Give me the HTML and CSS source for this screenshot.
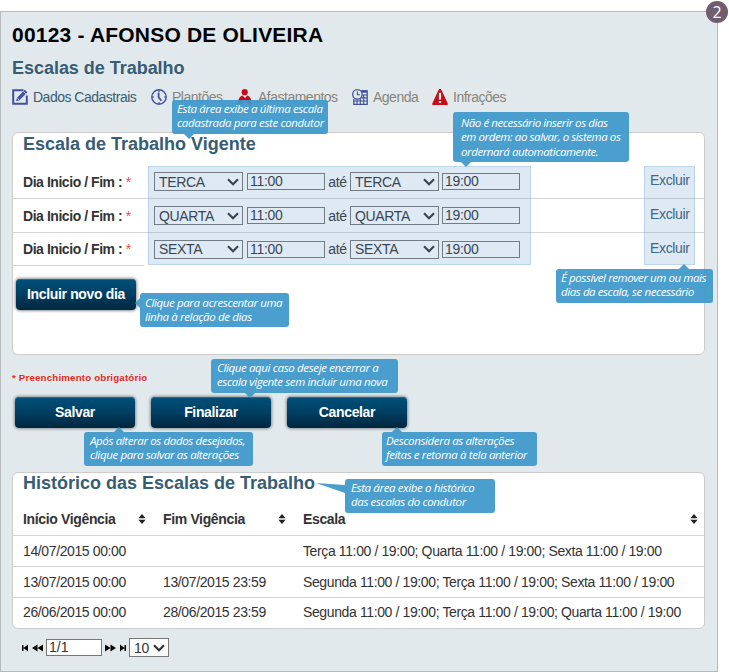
FILE: index.html
```html
<!DOCTYPE html>
<html lang="pt-BR">
<head>
<meta charset="utf-8">
<title>Escalas de Trabalho</title>
<link rel="stylesheet" href="styles.css">
</head>
<body>
<svg width="0" height="0" class="defs" aria-hidden="true">
  <symbol id="chev" viewBox="0 0 12 8"><path d="M1 1.2L6 6.2L11 1.2" fill="none" stroke="currentColor" stroke-width="2.2"/></symbol>
  <symbol id="sort" viewBox="0 0 8 10"><path d="M4 0L7.6 4.3H.4zM4 10L.4 5.7H7.6z" fill="#222"/></symbol>
</svg>
<main class="frame">
  <h1>00123 - AFONSO DE OLIVEIRA</h1>
  <h2 class="subtitle">Escalas de Trabalho</h2>
  <nav class="tabs">
    <a class="tab active t1"><svg viewBox="0 0 16 16"><path d="M11.5 1.2H1.2V14.8H14.8V6.5" fill="none" stroke="#41519f" stroke-width="2"/><path d="M4 12.3L5 8.8L12.8 .8L15.4 3.3L7.5 11.3z" fill="#41519f"/><path d="M5.2 9.2L7.1 11M11.4 2.4L13.8 4.8" stroke="#e2e9ec" stroke-width=".8"/></svg>Dados Cadastrais</a>
    <a class="tab t2"><svg viewBox="0 0 16 16"><circle cx="8" cy="8" r="7.2" fill="none" stroke="#41519f" stroke-width="1.4"/><path d="M8 1v2M8 13v2M1 8h2M13 8h2" stroke="#41519f" stroke-width="1.2"/><path d="M7.6 3.5V8.2L10.4 11.8" fill="none" stroke="#41519f" stroke-width="1.8"/></svg>Plantões</a>
    <a class="tab t3"><svg viewBox="0 0 16 16"><circle cx="7.7" cy="3.2" r="3.1" fill="#cb0a18"/><path d="M.7 15.5C.7 10 3 7.2 5.4 6.5L8 9L10.4 6.5C13 7.4 14.7 10 14.7 15.5H11.8L8 11L4 15.5z" fill="#cb0a18"/></svg>Afastamentos</a>
    <a class="tab t4"><svg viewBox="0 0 16 16"><path d="M9 1.8H15.2V15.3H1.8V10" fill="none" stroke="#41519f" stroke-width="1.3"/><path d="M9.5 2.4H15" stroke="#41519f" stroke-width="2.6"/><path d="M10 6h5M9 8.9h6M2 12h13M5 10v5M8.3 9.5v6M11.7 6v9" stroke="#41519f" stroke-width="1.1"/><circle cx="5.4" cy="5.4" r="4.7" fill="#e2e9ec" stroke="#41519f" stroke-width="1.3"/><path d="M5.4 2.5v3.2h2.6" fill="none" stroke="#41519f" stroke-width="1.1"/></svg>Agenda</a>
    <a class="tab t5"><svg viewBox="0 0 16 16"><path d="M8 0Q9 0 9.6 1.3L15.6 14.3Q16.2 16 14.8 16H1.2Q-.2 16 .4 14.3L6.4 1.3Q7 0 8 0z" fill="#cb0a18"/><path d="M8 3.7V10.4M8 12v2" stroke="#fff" stroke-width="2.2"/></svg>Infrações</a>
  </nav>

  <section class="panel schedule">
    <h2>Escala de Trabalho Vigente</h2>
    <div class="days">
      <div class="day"><span class="label">Dia Inicio / Fim : <i>*</i></span><span class="select">TERCA<svg><use href="#chev"/></svg></span><span class="input">11:00</span><span class="ate">até</span><span class="select">TERCA<svg><use href="#chev"/></svg></span><span class="input">19:00</span><a class="remove">Excluir</a></div>
      <div class="day"><span class="label">Dia Inicio / Fim : <i>*</i></span><span class="select">QUARTA<svg><use href="#chev"/></svg></span><span class="input">11:00</span><span class="ate">até</span><span class="select">QUARTA<svg><use href="#chev"/></svg></span><span class="input">19:00</span><a class="remove">Excluir</a></div>
      <div class="day last"><span class="label">Dia Inicio / Fim : <i>*</i></span><span class="select">SEXTA<svg><use href="#chev"/></svg></span><span class="input">11:00</span><span class="ate">até</span><span class="select">SEXTA<svg><use href="#chev"/></svg></span><span class="input">19:00</span><a class="remove">Excluir</a></div>
      <div class="hl hl-fields"></div>
      <div class="hl hl-remove"></div>
    </div>
    <button class="btn add">Incluir novo dia</button>
  </section>

  <p class="required">* Preenchimento obrigatório</p>
  <div class="actions">
    <button class="btn">Salvar</button>
    <button class="btn">Finalizar</button>
    <button class="btn">Cancelar</button>
  </div>

  <section class="panel history">
    <h2>Histórico das Escalas de Trabalho</h2>
    <div class="row head"><span>Início Vigência<svg><use href="#sort"/></svg></span><span>Fim Vigência<svg><use href="#sort"/></svg></span><span>Escala<svg><use href="#sort"/></svg></span></div>
    <div class="row"><span>14/07/2015 00:00</span><span></span><span>Terça 11:00 / 19:00; Quarta 11:00 / 19:00; Sexta 11:00 / 19:00</span></div>
    <div class="row"><span>13/07/2015 00:00</span><span>13/07/2015 23:59</span><span>Segunda 11:00 / 19:00; Terça 11:00 / 19:00; Sexta 11:00 / 19:00</span></div>
    <div class="row"><span>26/06/2015 00:00</span><span>28/06/2015 23:59</span><span>Segunda 11:00 / 19:00; Terça 11:00 / 19:00; Quarta 11:00 / 19:00</span></div>
  </section>

  <div class="pager">
    <svg width="6" height="8" viewBox="0 0 6 8"><path d="M0 1h1.5v6H0zM6 0.5v7L1.5 4z"/></svg>
    <svg class="prev" width="11" height="8" viewBox="0 0 11 8"><path d="M5.5 .5v7L0 4zM11 .5v7L5.5 4z"/></svg>
    <span class="page">1/1</span>
    <svg class="next" width="11" height="8" viewBox="0 0 11 8"><path d="M0 .5v7L5.5 4zM5.5 .5v7L11 4z"/></svg>
    <svg class="end" width="6" height="8" viewBox="0 0 6 8"><path d="M4.5 1H6v6H4.5zM0 .5v7L4.5 4z"/></svg>
    <span class="size">10<svg class="chev"><use href="#chev"/></svg></span>
  </div>
</main>

<div class="badge">2</div>
<div class="tip tip-current down">Esta área exibe a última escala<br>cadastrada para este condutor</div>
<div class="tip tip-order down">Não é necessário inserir os dias<br>em ordem: ao salvar, o sistema os<br>ordernará automaticamente.</div>
<div class="tip tip-remove up">É possível remover um ou mais<br>dias da escala, se necessário</div>
<div class="tip tip-add left">Clique para acrescentar uma<br>linha à relação de dias</div>
<div class="tip tip-finish down">Clique aqui caso deseje encerrar a<br>escala vigente sem incluir uma nova</div>
<div class="tip tip-save up">Após alterar os dados desejados,<br>clique para salvar as alterações</div>
<div class="tip tip-cancel up">Desconsidera as alterações<br>feitas e retorna à tela anterior</div>
<div class="tip tip-history tail">Esta área exibe o histórico<br>das escalas do condutor</div>
</body>
</html>
```
FILE: styles.css
```css
* { box-sizing: border-box; }
body { margin: 0; padding-top: 11px; height: 672px; position: relative; overflow: hidden; background: #fff; font-family: "Liberation Sans", Arial, sans-serif; color: #333; }
h1, h2, p { margin: 0; font-weight: bold; white-space: nowrap; }
.defs { position: absolute; }
.frame { width: 718px; height: 661px; border: 1px solid #b5babd; background: #e2e9ec; padding: 10px 11px 0; }
h1 { font-size: 21px; line-height: 26px; letter-spacing: .2px; color: #000; }
h2 { color: #365d74; font-size: 18px; line-height: 22px; }
.subtitle { letter-spacing: -.03px; margin-top: 9px; }
.tabs { display: flex; height: 20px; margin-top: 8px; align-items: center; font-size: 14px; letter-spacing: -.5px; color: #88847a; }
.tab { display: flex; align-items: center; gap: 5px; white-space: nowrap; }
.tab svg { width: 16px; height: 16px; }
.active { color: #365d74; }
.t1 { width: 139px; }
.t2 { width: 86px; }
.t3 { width: 115px; }
.t4 { width: 80px; }

.panel { width: 693px; background: #fff; border: 1px solid #ccc; border-radius: 6px; }
.schedule { height: 223px; margin-top: 25px; }
.panel h2 { padding-left: 10px; }
.days { position: relative; margin-top: 10px; }
.day { display: flex; align-items: center; height: 34px; border-bottom: 1px solid #d4d4d4; font-size: 14px; }
.day.last { height: 33px; border-bottom-color: transparent; background: linear-gradient(#d4d4d4, #d4d4d4) 0 100% / 131px 1px no-repeat border-box; }
.label { width: 141px; padding-left: 10px; font-weight: bold; font-size: 14px; letter-spacing: -.45px; white-space: nowrap; }
.label i { color: #f44a3c; font-style: normal; font-weight: normal; }
.select, .size { display: flex; align-items: center; justify-content: space-between; border: 1px solid #777; height: 19px; background: #fff; }
.select { width: 89px; padding: 0 3px 0 4px; font-size: 14px; letter-spacing: -.35px; }
.select svg, .size svg { width: 12px; height: 8px; }
.input { width: 78px; height: 17px; border: 1px solid #777; margin-left: 4px; padding-left: 2px; line-height: 15px; letter-spacing: -.3px; }
.ate { width: 25px; text-align: center; letter-spacing: -.4px; }
.ate ~ .input { margin-left: 3px; }
.remove { margin-left: 130px; padding-bottom: 3px; color: #365d74; letter-spacing: -.35px; }
.hl { position: absolute; top: 1px; height: 99px; border: 1px solid #79b0d955; background: #5a91c733; }
.hl-fields { left: 135px; width: 383px; }
.hl-remove { left: 631px; width: 51px; }

.btn { width: 120px; height: 31px; padding: 0 0 1px; border: 0; border-radius: 4px; background: linear-gradient(#00507b, #003f62 50%, #00273f); box-shadow: 0 0 3px 1px #8a9298, inset 0 1px 0 #2c6a8c; color: #fff; font: bold 14px "Liberation Sans", Arial, sans-serif; letter-spacing: -.35px; white-space: nowrap; }
.add { display: block; margin: 13px 0 0 3px; }
.required { margin-top: 16px; font-size: 9.7px; line-height: 14px; letter-spacing: .19px; color: #e4291c; }
.actions { display: flex; gap: 16px; margin: 12px 0 0 3px; }

.history { height: 157px; margin-top: 44px; }
.history h2 { line-height: 20px; }
.row { display: grid; grid-template-columns: 140px 140px 1fr; height: 31px; padding: 0 0 1px 10px; align-items: center; font-size: 14px; letter-spacing: -.38px; border-bottom: 1px solid #d4d4d4; white-space: nowrap; }
.row:last-child { border-bottom: 0; padding-bottom: 3px; }
.row.head { height: 43px; padding-top: 11px; font-size: 14px; font-weight: bold; letter-spacing: -.35px; }
.head span { display: flex; align-items: center; justify-content: space-between; }
.head svg { width: 8px; height: 10px; margin-right: 17px; }
.head span:last-child svg { margin-right: 6px; }

.pager { display: flex; align-items: center; height: 19px; margin: 9px 0 0 10px; font-size: 14px; }
.prev { margin-left: 4px; }
.page { width: 56px; height: 17px; margin: 0 3px; padding-left: 2px; border: 1px solid #777; background: #fff; line-height: 14px; }
.end { margin: 0 3px 0 4px; }
.size { width: 40px; padding: 0 3px 0 4px; letter-spacing: -.4px; }

.badge { position: absolute; left: 706px; top: 1px; width: 22px; height: 22px; border-radius: 50%; background: #705d70; color: #fff; font: 16px/22px "Open Sans", sans-serif; text-align: center; }
.tip { position: absolute; border-radius: 3px; background: #3d98cbed; color: #fff; font: italic 11.5px/14.4px "Open Sans", sans-serif; letter-spacing: -.37px; padding: 2px 0 0 5px; height: 34px; white-space: nowrap; }
.tip::after { content: ""; position: absolute; left: var(--x); border: 5px solid transparent; }
.down::after { top: 100%; border-top-color: #3d98cbed; border-bottom: 0; }
.up::after { bottom: 100%; border-bottom-color: #3d98cbed; border-top: 0; }
.left::after { right: 100%; top: 5px; border-right-color: #3d98cbed; border-left: 0; }
.tail::after { right: 100%; top: 4px; width: 29px; height: 10px; border: 0; background: #3d98cbed; clip-path: polygon(0 0, 100% 20%, 100% 100%); }
.tip-current { left: 172px; top: 100px; width: 156px; --x: 12px; }
.tip-order { left: 453px; top: 112px; width: 176px; height: 50px; padding: 4px 0 0 8px; letter-spacing: -.42px; --x: 8px; }
.tip-remove { left: 556px; top: 269px; width: 157px; letter-spacing: -.42px; --x: 123px; }
.tip-add { left: 140px; top: 293px; width: 149px; padding-top: 3px; }
.tip-finish { left: 211px; top: 359px; width: 187px; padding-left: 6px; --x: 34px; }
.tip-save { left: 84px; top: 432px; width: 169px; padding-left: 6px; --x: 30px; }
.tip-cancel { left: 382px; top: 432px; width: 155px; padding-left: 4px; --x: 10px; }
.tip-history { left: 345px; top: 479px; width: 150px; padding-left: 6px; }
```
